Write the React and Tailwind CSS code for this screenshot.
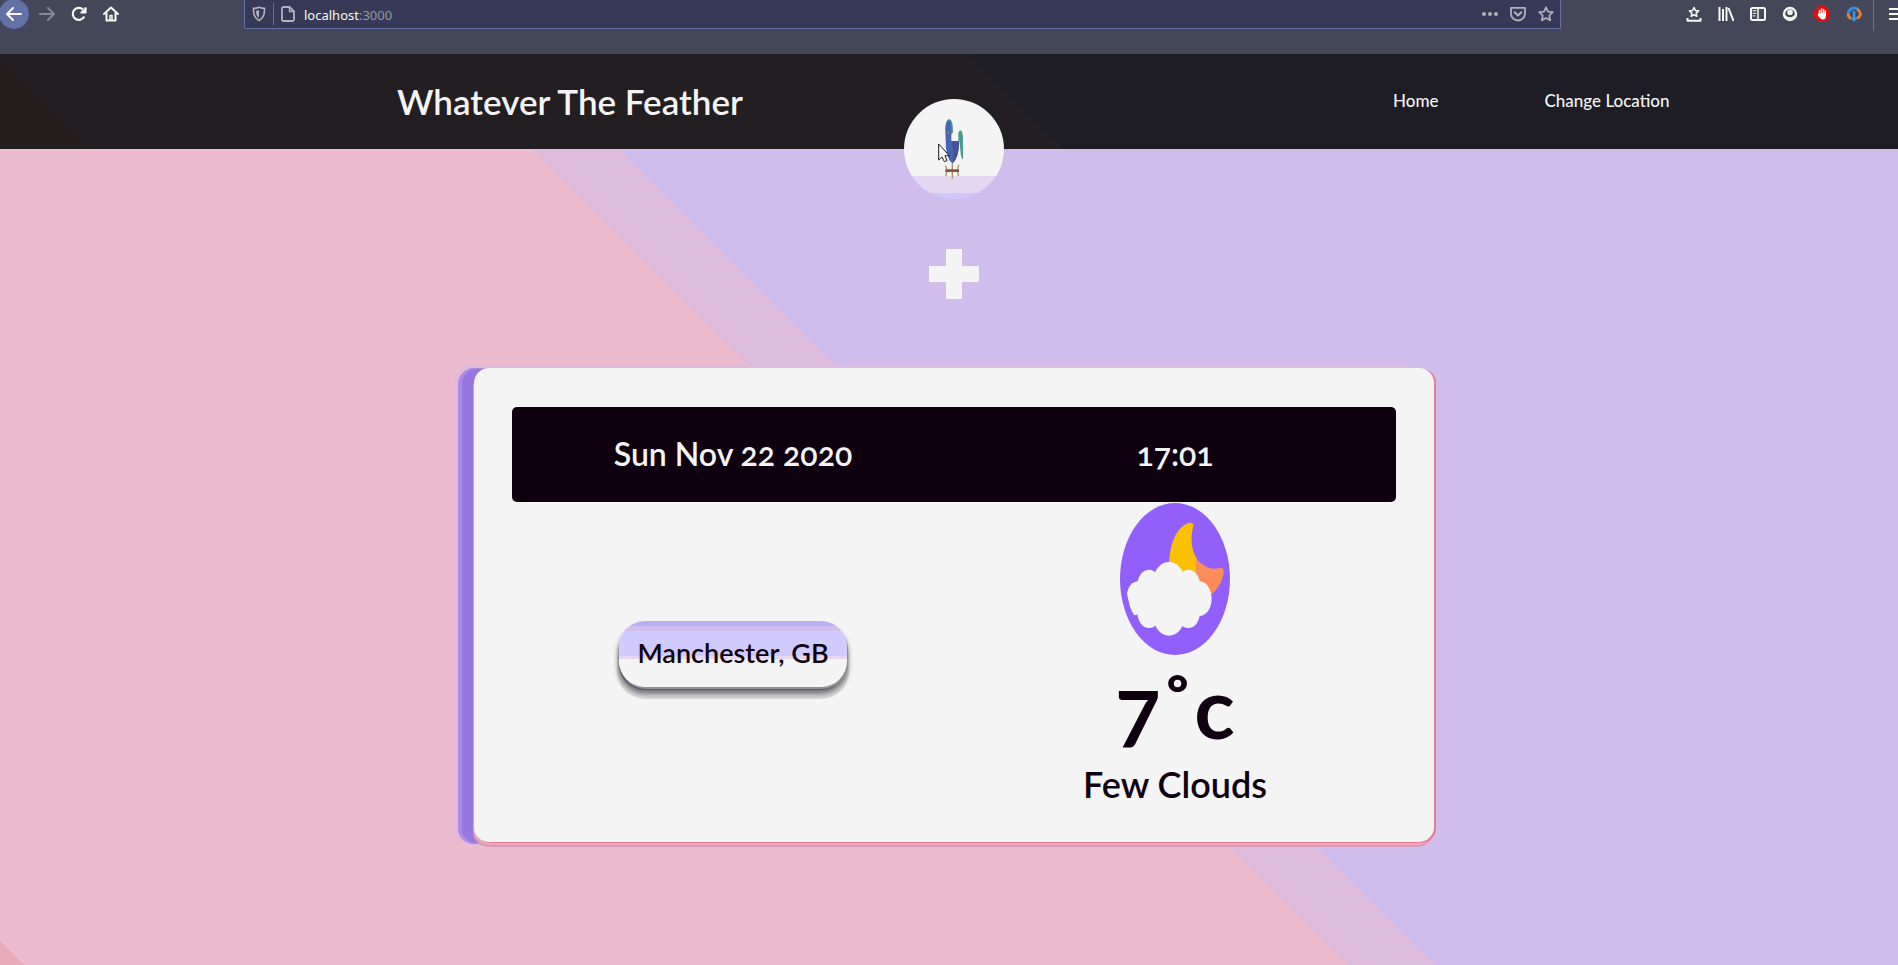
import React from "react";

function ToolButton({ label, className = "", children }) {
  return (
    <button type="button" aria-label={label} className={`flex h-7 w-8 shrink-0 items-center justify-center text-[#f8f8f2] ${className}`}>
      {children}
    </button>
  );
}

function Icon({ children, className = "h-4 w-4" }) {
  return (
    <svg viewBox="0 0 16 16" className={className} fill="none" stroke="currentColor" strokeWidth="2" strokeLinecap="round" strokeLinejoin="round" aria-hidden="true">
      {children}
    </svg>
  );
}

const STAR = "M8 1.3l2 4.3 4.8.6-3.5 3.3.9 4.8L8 12l-4.2 2.3.9-4.8L1.200 6.200 6 5.600z";

function BrowserBar() {
  return (
    <div className="h-[54px] overflow-hidden bg-[#44475a]">
      <div className="flex h-[29px] items-start">
        <div className="flex w-[30px] shrink-0 items-start">
          <button type="button" aria-label="Back" className="-mt-0.5 -ml-0.5 flex h-8 w-8 shrink-0 items-center justify-center rounded-full border border-[#3b4266] bg-[#6272a4] text-[#f8f8f2]">
            <Icon><path d="M15 8H1.500M7 2L1 8l6 6" /></Icon>
          </button>
        </div>
        <ToolButton label="Forward" className="ml-px text-[#858797]!"><Icon><path d="M1 8h13.500M9 2l6 6-6 6" /></Icon></ToolButton>
        <ToolButton label="Reload">
          <Icon><path d="M13.200 10.500A6 6 0 1 1 12 3.600M14.500 1.500v5h-5" strokeLinecap="butt" strokeWidth="2.200" /><path d="M15 1v5.500H9.500z" fill="currentColor" stroke="none" /></Icon>
        </ToolButton>
        <ToolButton label="Home">
          <Icon><path d="M1 8l7-6.500L15 8M3.500 7v7.500h9V7" /><path d="M7 14V9.500h2V14" strokeWidth="1.500" /></Icon>
        </ToolButton>
        <div className="ml-[117px] flex h-[29px] min-w-0 flex-1 items-center rounded-b-xs border border-t-0 border-[#6272a4] bg-[#373a56] pl-[6px] text-[#b1b2bd]">
          <svg viewBox="0 0 16 16" className="h-4 w-4 shrink-0" aria-hidden="true">
            <path d="M8 1.200c2 .8 4 1.200 5.500 1.200.3 5.500-.5 9.300-5.500 12.200C3 11.700 2.200 7.900 2.500 2.400 4 2.400 6 2 8 1.200z" fill="none" stroke="currentColor" strokeWidth="1.600" />
            <path d="M8 4v8c-2.300-1.800-3-4-3-7.200 1 0 2-.3 3-.8z" fill="currentColor" />
          </svg>
          <span className="ml-[6px] h-[22px] w-px shrink-0 bg-[#6272a4]" />
          <Icon className="ml-[6px] h-4 w-4 shrink-0"><path d="M2 2.500Q2 1 3.500 1H9.500L14 5.500v8Q14 15 12.500 15h-9Q2 15 2 13.500z" strokeWidth="1.800" /><path d="M9.500 1v4.500H14" strokeWidth="1.500" /></Icon>
          <div className="relative ml-2 min-w-0 flex-1 pt-px font-['Noto_Sans','Open_Sans',sans-serif] text-[13px] leading-5 normal-nums">
            <input aria-label="Address" defaultValue="localhost:3000" className="block w-full bg-transparent text-transparent caret-white outline-none" />
            <span aria-hidden="true" className="pointer-events-none absolute inset-0 pt-px text-[#9698a6]">
              <span className="text-[#f8f8f2]">localhost</span>:3000
            </span>
          </div>
          <button type="button" aria-label="Page actions" className="flex w-7 justify-center">
            <svg viewBox="0 0 16 16" className="h-4 w-4" fill="currentColor" aria-hidden="true"><circle cx="2" cy="8" r="2" /><circle cx="8" cy="8" r="2" /><circle cx="14" cy="8" r="2" /></svg>
          </button>
          <button type="button" aria-label="Save" className="flex w-7 justify-center">
            <Icon><path d="M1 1.800h14V7.500a7 7 0 0 1-14 0z" strokeWidth="1.800" /><path d="M4.700 6.300L8 9.500l3.300-3.200" /></Icon>
          </button>
          <button type="button" aria-label="Bookmark" className="flex w-7 justify-center">
            <Icon><path d={STAR} strokeWidth="1.700" /></Icon>
          </button>
        </div>
        <div className="ml-[117px] flex shrink-0 items-start">
          <ToolButton label="Bookmarks menu">
            <Icon><path d="M8 1.500l1.400 3 3.100.4-2.300 2.200.6 3.200L8 8.700l-2.800 1.600.6-3.200-2.300-2.200 3.100-.4z" strokeWidth="1.600" /><path d="M1.500 12v2.700h13V12" strokeLinecap="butt" /></Icon>
          </ToolButton>
          <ToolButton label="Library">
            <Icon><path d="M1.500 1v14M5 3v12M8.500 1v14M10.500 2l5 13" strokeLinecap="butt" /></Icon>
          </ToolButton>
          <ToolButton label="Sidebars">
            <Icon><rect x="1" y="2" width="14" height="12" rx="1.500" /><path d="M8 2v12" strokeWidth="1.500" /><path d="M3 4.700h3M3 7.300h3M3 9.900h2" strokeWidth="1" /></Icon>
          </ToolButton>
          <ToolButton label="Account">
            <svg viewBox="0 0 16 16" className="h-4 w-4" fill="none" aria-hidden="true"><circle cx="8" cy="8" r="6" stroke="currentColor" strokeWidth="2.400" /><circle cx="8" cy="6.200" r="2.800" fill="currentColor" /><path d="M3 9.500h2.200q2.800 2.200 5.600 0H13L11.500 13.500h-7z" fill="currentColor" /><path d="M4.500 9.300q3.500 2.700 7 0" stroke="#44475a" strokeWidth="1.300" /></svg>
          </ToolButton>
          <ToolButton label="Content blocker">
            <svg viewBox="0 0 16 16" className="h-4 w-4" aria-hidden="true"><path d="M4.700 0h6.600L16 4.700v6.600L11.300 16H4.700L0 11.300V4.700z" fill="#e40d0d" /><path d="M5.500 8V4.500M7.500 8V3M9.500 8V3.500M11.300 8V5" stroke="#fff" strokeWidth="1.500" strokeLinecap="round" /><path d="M4.800 7h7.200v2.500Q12 13.500 9 13.500T3.500 8.500z" fill="#fff" /></svg>
          </ToolButton>
          <ToolButton label="Download helper">
            <svg viewBox="0 0 16 16" className="h-4 w-4" fill="none" aria-hidden="true"><path d="M2.500 9A5.800 5.800 0 0 1 12 3.500" stroke="#2f8fe8" strokeWidth="3" /><path d="M11.500 3.200Q16 7 13.500 10.500L11 12.800M2 8q.5 3.500 3 4.800" stroke="#ee7d30" strokeWidth="2.800" /><path d="M8 5v8" stroke="#2f9bf2" strokeWidth="2.500" /><path d="M4.300 11.500h7.400L8 16z" fill="#2f9bf2" /></svg>
          </ToolButton>
          <span className="ml-[3px] h-[31px] w-px bg-[#6272a4]" />
          <button type="button" aria-label="Menu" className="ml-[15px] h-7 w-[9px] overflow-hidden text-[#f8f8f2]">
            <svg viewBox="0 0 16 16" className="h-4 w-4" fill="none" stroke="currentColor" strokeWidth="2" aria-hidden="true"><path d="M0 3h16M0 8h16M0 13h16" /></svg>
          </button>
        </div>
      </div>
    </div>
  );
}

function BirdLogo() {
  return (
    <svg viewBox="72 57 300 300" className="h-full w-full" aria-hidden="true">
      <path d="M196 150Q196 117 208 117Q220 120 219 158L213 162V150z" fill="#4b9a8f" />
      <path d="M196 150Q197 122 207 122Q215 124 214 150V183H237Q238 232 217 251Q197 235 197 183z" fill="#4765b5" />
      <path d="M213 183H237Q237 235 217 251Q226 215 213 183z" fill="#465197" />
      <path d="M235 183V160Q237 151 242 151Q248 153 249 175V238Q243 236 242 218L238 183z" fill="#4b9a8f" />
      <path d="M203 156h5l-2 7z" fill="#b0934f" />
      <path d="M197 257q6 14 0 31M236 254q-6 16 0 34M217 252v44" fill="none" stroke="#ab8c63" strokeWidth="4" />
      <path d="M196 272h41" stroke="#82533f" strokeWidth="8" />
    </svg>
  );
}

function Header() {
  return (
    <header className="bg-[linear-gradient(225deg,#1e1d26_46.7%,#221e22_46.7%,#221e22_95.500%,#251c1d_95.500%)] pl-[10px]">
      <div className="relative">
        <div className="ml-[20.500%] flex h-[95px] w-[67.400%] items-center justify-between pb-0.5 text-[#f4f4f4]">
          <h1 className="text-[35px] leading-10 font-semibold">Whatever The Feather</h1>
          <nav className="flex gap-[106px] text-[17px] leading-6 font-medium">
            <a href="#home">Home</a>
            <a href="#location">Change Location</a>
          </nav>
        </div>
        <div className="absolute top-[45px] left-1/2 -ml-[50px] h-[100px] w-[100px] overflow-hidden rounded-full bg-[linear-gradient(#f4f4f4_77px,#e4d7f2_77px,#e4d7f2_94px,#cfc6fb_94px)]">
          <BirdLogo />
        </div>
        <svg viewBox="174 191 36 60" className="absolute top-[89px] left-1/2 -ml-4 h-5 w-3" aria-hidden="true">
          <path d="M176 194V242L186 233L193 247L201 244L195 229H208z" fill="#f4f4f4" stroke="#1e1d26" strokeWidth="3" />
        </svg>
      </div>
    </header>
  );
}

function WeatherIcon() {
  return (
    <svg viewBox="180 39 330 456" className="h-[152px] w-[110px]" role="img" aria-label="Cloudy night">
      <ellipse cx="345" cy="267" rx="165" ry="228" fill="#925ffd" />
      <path d="M327 240C325 165 350 108 388 98Q402 97 400 107C388 155 398 185 410 205V270H330z" fill="#fbbf04" />
      <path d="M409 205C430 232 455 242 483 233Q494 234 490 254C485 275 472 300 455 312L409 290z" fill="#fd8d58" />
      <g fill="#f4f4f4">
        <ellipse cx="327" cy="268" rx="45" ry="52" />
        <ellipse cx="267" cy="286" rx="35" ry="47" />
        <ellipse cx="385" cy="286" rx="35" ry="47" />
        <ellipse cx="236" cy="312" rx="34" ry="38" />
        <path d="M202 305Q206 355 223 376L250 370V290z" />
        <ellipse cx="418" cy="326" rx="37" ry="52" />
        <ellipse cx="267" cy="367" rx="35" ry="47" />
        <ellipse cx="385" cy="367" rx="35" ry="47" />
        <ellipse cx="327" cy="385" rx="45" ry="52" />
        <path d="M225 290h205v80H225z" />
      </g>
    </svg>
  );
}

function WeatherCard() {
  return (
    <section className="relative mt-[69px] w-[960px] max-w-full rounded-[15px] bg-[#f4f4f4] px-[38px] pt-[39px] pb-[37px] text-[#0e000e] shadow-[3px_0_0_-1px_#e77c98,2px_1px_0_#e77c98,0_3px_0_#eaa9b7,-1px_5px_0_#d79bbe,-12px_1px_0_#9678e0,-15px_1px_0_1px_#aa8ae2,-16px_0_0_3px_#dcbcdd]">
      <div className="grid h-[95px] grid-cols-2 items-center rounded-[5px] bg-[#0e000e] pb-0.5 text-center text-[32px] leading-10 font-semibold text-[#f4f4f4]">
        <h2>Sun Nov 22 2020</h2>
        <time>17:01</time>
      </div>
      <div className="grid grid-cols-2 items-center justify-items-center">
        <button type="button" className="h-[66px] rounded-[26px] bg-[linear-gradient(#b9b0f9_5px,#d0bfeb_5px,#d0bfeb_10px,#d1caff_10px,#d1caff_35px,#e5d6f2_35px,#e5d6f2_38px,#f4f4f4_38px)] px-[18px] pb-0.5 text-[27px] leading-8 font-semibold shadow-[1px_2px_0_#919296,0_3px_1px_#555866,0_6px_5px_1px_#77777c,0_10px_0_2px_#d8d8d8]">
          Manchester, GB
        </button>
        <div className="flex flex-col items-center pt-px">
          <WeatherIcon />
          <p className="mt-1 mb-2 text-[84px] leading-[96px] font-bold">7˚c</p>
          <p className="text-[36px] leading-[42px] font-semibold">Few Clouds</p>
        </div>
      </div>
    </section>
  );
}

export default function App() {
  return (
    <div className="flex min-h-screen flex-col font-['Lato',sans-serif] oldstyle-nums">
      <BrowserBar />
      <div className="flex flex-1 flex-col bg-[linear-gradient(225deg,#d0bdeb_48.900%,#dcbbdc_48.900%,#dcbbdc_52%,#edbbcf_52%,#edbbcf_99.140%,#eaabb9_99.140%)]">
        <Header />
        <main className="flex flex-1 flex-col items-center pt-[100px] pb-10 pl-[10px]">
          <button type="button" aria-label="Add location" className="h-[50px] w-[50px] text-[#f4f4f4]">
            <svg viewBox="0 0 50 50" className="h-full w-full" fill="currentColor" aria-hidden="true"><path d="M17 0h16v17h17v16H33v17H17V33H0V17h17z" /></svg>
          </button>
          <WeatherCard />
        </main>
      </div>
    </div>
  );
}
